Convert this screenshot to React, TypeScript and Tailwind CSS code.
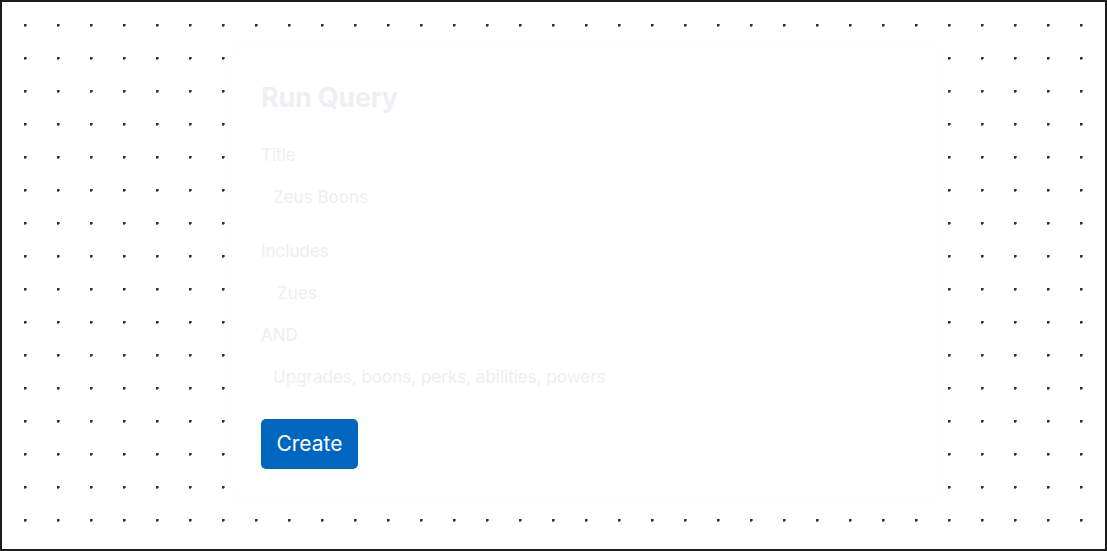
import React from "react";

const font = { fontFamily: "Inter, 'Noto Sans', sans-serif" };

export default function App() {
  return (
    <div
      className="w-[1107px] h-[551px] border-2 border-[#1c1c1c] bg-white bg-[radial-gradient(circle_at_1px_1px,#2f2c5a_1.4px,transparent_1.9px)] bg-[length:33px_33px] bg-[position:22px_22px] pl-[230px] pt-[45px]"
      style={font}
    >
      <div className="w-[708px] h-[450px] bg-white rounded-lg shadow-[0_0_2px_rgba(0,0,0,0.04)] pt-[33px] pl-[29px] flex flex-col">
        <h1 className="h-[36px] leading-[36px] text-[27px] font-bold text-[#efeef2] tracking-[-0.01em]">
          Run Query
        </h1>
        <div className="mt-[27px] h-[24px] leading-[24px] text-[17px] text-[#efeef2]">Title</div>
        <input
          className="mt-[10px] h-[40px] w-[640px] pl-[12px] text-[17px] bg-transparent outline-none placeholder:text-[#efeef2]"
          placeholder="Zeus Boons"
        />
        <div className="mt-[22px] h-[24px] leading-[24px] text-[17px] text-[#efeef2]">Includes</div>
        <input
          className="mt-[10px] h-[40px] w-[640px] pl-[16px] text-[17px] bg-transparent outline-none placeholder:text-[#efeef2]"
          placeholder="Zues"
        />
        <div className="mt-[10px] h-[24px] leading-[24px] text-[17px] text-[#efeef2]">AND</div>
        <input
          className="mt-[10px] h-[40px] w-[640px] pl-[12px] text-[17px] bg-transparent outline-none placeholder:text-[#efeef2]"
          placeholder="Upgrades, boons, perks, abilities, powers"
        />
        <div className="mt-[22px]">
          <button className="h-[50px] w-[97px] rounded-[5px] bg-[#0066c0] text-white text-[21px] flex items-center justify-center">
            Create
          </button>
        </div>
      </div>
    </div>
  );
}
